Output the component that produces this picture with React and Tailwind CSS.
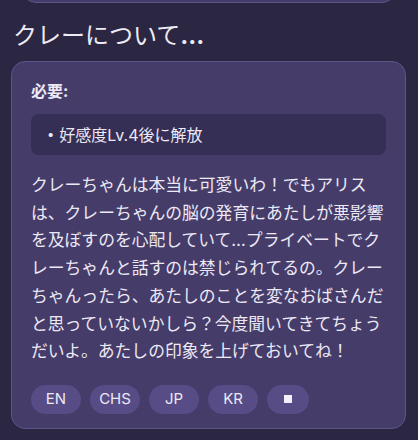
export default function App() {
  const langs = ["EN", "CHS", "JP", "KR"];
  const text =
    "クレーちゃんは本当に可愛いわ！でもアリスは、クレーちゃんの脳の発育にあたしが悪影響を及ぼすのを心配していて…プライベートでクレーちゃんと話すのは禁じられてるの。クレーちゃんったら、あたしのことを変なおばさんだと思っていないかしら？今度聞いてきてちょうだいよ。あたしの印象を上げておいてね！";

  return (
    <div
      className="w-[418px] h-[440px] overflow-hidden bg-[#2b2641] text-[#ece9f5]"
      style={{ fontFamily: '"Inter", "Noto Sans CJK JP", sans-serif' }}
    >
      <div className="mx-[22px] -mt-[18px] h-[21px] rounded-b-[14px] border border-[#5d5489] bg-[#453c6a]" />

      <h2 className="mt-[17px] ml-[13px] text-[24px] leading-[32px] font-normal text-[#eeebf6]">
        クレーについて<span className="font-bold">...</span>
      </h2>

      <div className="mx-[11px] mt-[9px] w-[395px] rounded-[14px] border border-[#5d5489] bg-[#453c6a] px-[19px] pt-[17px] pb-[14px]">
        <p className="text-[16px] leading-[24px] font-bold">必要:</p>

        <div className="mt-[11px] flex h-[41px] items-center rounded-[8px] bg-[#352e55] px-4 text-[16px]">
          <span className="mr-[5px] text-[13px]">•</span>
          <span>好感度Lv.4後に解放</span>
        </div>

        <p className="mt-[17px] text-[16.8px] leading-[27.7px]">{text}</p>

        <div className="mt-[19px] flex gap-[9px]">
          {langs.map((l) => (
            <button
              key={l}
              className="flex h-[29px] w-[50px] items-center justify-center rounded-full bg-[#574c86] text-[15px] text-[#ece9f5]"
            >
              {l}
            </button>
          ))}
          <button className="flex h-[29px] w-[42px] items-center justify-center rounded-full bg-[#574c86]">
            <span className="block h-[8px] w-[8px] bg-[#f2f0f8]" />
          </button>
        </div>
      </div>
    </div>
  );
}
